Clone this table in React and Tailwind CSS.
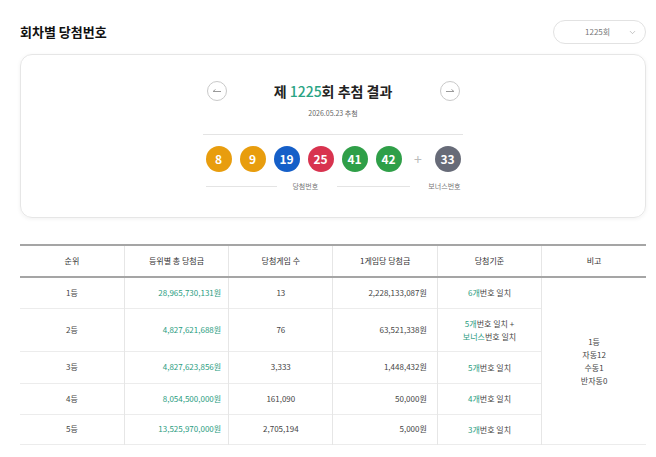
import { ChevronDown } from "lucide-react";

const balls = [
  { n: 8, c: "bg-[#e89d0e]" },
  { n: 9, c: "bg-[#e89d0e]" },
  { n: 19, c: "bg-[#155fc8]" },
  { n: 25, c: "bg-[#d8334f]" },
  { n: 41, c: "bg-[#2f9f48]" },
  { n: 42, c: "bg-[#2f9f48]" },
];

const rows = [
  { rank: "1등", total: "28,965,730,131원", count: "13", per: "2,228,133,087원", h: "h-[31px]" },
  { rank: "2등", total: "4,827,621,688원", count: "76", per: "63,521,338원", h: "h-[43px]", two: true },
  { rank: "3등", total: "4,827,623,856원", count: "3,333", per: "1,448,432원", h: "h-[32px]", k: "5개" },
  { rank: "4등", total: "8,054,500,000원", count: "161,090", per: "50,000원", h: "h-[31px]", k: "4개" },
  { rank: "5등", total: "13,525,970,000원", count: "2,705,194", per: "5,000원", h: "h-[30px]", k: "3개" },
];

function Arrow({ right }) {
  return (
    <button className="flex h-5 w-5 items-center justify-center rounded-full border border-[#c9c9c9] bg-white">
      <svg width="12" height="12" viewBox="0 0 12 12" fill="none" stroke="#9a9a9a" strokeWidth="1">
        {right ? <path d="M2 6.5h8M10 6.5L7.5 4.5" /> : <path d="M10 6.5H2M2 6.5l2.5-2" />}
      </svg>
    </button>
  );
}

function Ball({ n, c }) {
  return (
    <span className={`flex h-[26px] w-[26px] items-center justify-center rounded-full text-[12px] font-bold text-white ${c}`}>
      {n}
    </span>
  );
}

export default function App() {
  return (
    <div className="h-[457px] w-[656px] overflow-hidden bg-white pl-5 pr-2.5 pt-5 font-['Noto_Sans_CJK_KR',sans-serif] text-[#333]">
      <div className="flex h-6 items-center justify-between">
        <h2 className="text-[13px] font-bold text-[#111]">회차별 당첨번호</h2>
        <div className="flex h-6 w-[93px] items-center justify-between rounded-full border border-[#e2e2e2] pl-[31px] pr-2 text-[8px] text-[#777]">
          <span>1225회</span>
          <ChevronDown size={9} strokeWidth={1.5} className="text-[#999]" />
        </div>
      </div>

      <div className="mt-2.5 flex h-[164px] flex-col items-center rounded-xl border border-[#e6e6e6] shadow-[0_1px_4px_rgba(0,0,0,0.06)]">
        <div className="mt-[26px] flex h-5 w-[253px] items-center justify-between">
          <Arrow />
          <h3 className="text-[14px] font-bold leading-5 text-[#222]">
            제 <span className="font-medium text-[#2aa484]">1225</span>회 추첨 결과
          </h3>
          <Arrow right />
        </div>
        <p className="mt-[7px] h-2.5 text-[7px] leading-[10px] text-[#666]">2026.05.23 추첨</p>
        <div className="mt-4 w-[260px] border-t border-[#e4e4e4]" />
        <div className="mt-[11px] flex w-[255px] items-center">
          <div className="flex gap-2">
            {balls.map((b) => (
              <Ball key={b.n} {...b} />
            ))}
          </div>
          <span className="w-[33px] text-center text-[14px] text-[#bbb]">+</span>
          <Ball n={33} c="bg-[#676b78]" />
        </div>
        <div className="mt-[9px] flex h-2.5 w-[255px] items-center text-[7px] text-[#777]">
          <span className="w-[72px] border-t border-[#e4e4e4]" />
          <span className="ml-[15px] w-[28px] whitespace-nowrap">당첨번호</span>
          <span className="ml-[17px] w-[73px] border-t border-[#e4e4e4]" />
          <span className="ml-[18px] whitespace-nowrap">보너스번호</span>
        </div>
      </div>

      <table className="mt-[26px] w-full table-fixed border-collapse text-[8px] text-[#444]">
        <thead>
          <tr className="h-8 border-y-2 border-[#a5a5a5]">
            {["순위", "등위별 총 당첨금", "당첨게임 수", "1게임당 당첨금", "당첨기준", "비고"].map((t, i) => (
              <th
                key={t}
                className={`font-normal text-[#333] ${i > 0 ? "border-l border-[#e6e6e6]" : ""}`}
              >
                {t}
              </th>
            ))}
          </tr>
        </thead>
        <tbody>
          {rows.map((r, i) => (
            <tr key={r.rank} className={`${r.h} border-b border-[#ececec]`}>
              <td className="text-center">{r.rank}</td>
              <td className="border-l border-[#e6e6e6] pr-[7px] text-right text-[#2a9d7f]">{r.total}</td>
              <td className="border-l border-[#e6e6e6] text-center">{r.count}</td>
              <td className="border-l border-[#e6e6e6] pr-[10px] text-right">{r.per}</td>
              <td className="border-l border-[#e6e6e6] text-center leading-[13px]">
                {i === 0 && (
                  <>
                    <span className="text-[#2a9d7f]">6개</span>번호 일치
                  </>
                )}
                {r.two && (
                  <>
                    <span className="text-[#2a9d7f]">5개</span>번호 일치 +
                    <br />
                    <span className="text-[#2a9d7f]">보너스</span>번호 일치
                  </>
                )}
                {r.k && (
                  <>
                    <span className="text-[#2a9d7f]">{r.k}</span>번호 일치
                  </>
                )}
              </td>
              {i === 0 && (
                <td rowSpan={5} className="border-l border-[#e6e6e6] text-center leading-[13px]">
                  1등
                  <br />
                  자동12
                  <br />
                  수동1
                  <br />
                  반자동0
                </td>
              )}
            </tr>
          ))}
        </tbody>
      </table>
    </div>
  );
}
